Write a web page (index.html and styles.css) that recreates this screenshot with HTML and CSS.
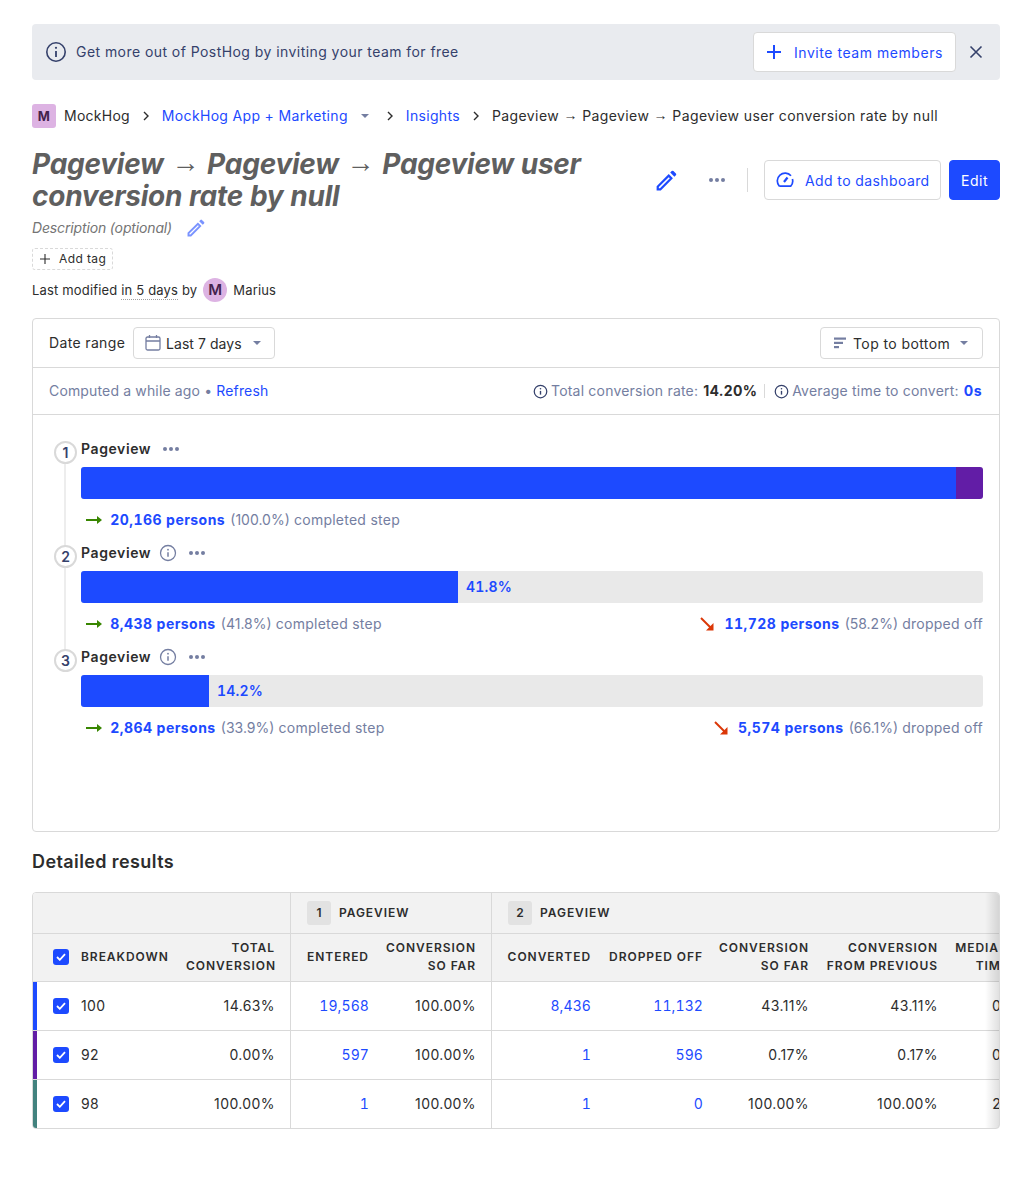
FILE: index.html
```html
<!DOCTYPE html>
<html>
<head>
<meta charset="utf-8">
<title>Pageview funnel</title>
<link rel="stylesheet" href="styles.css">
</head>
<body>

<div class="banner">
  <svg class="banner-info" width="24" height="24" viewBox="0 0 24 24" fill="none" stroke="currentColor"><circle cx="12" cy="12" r="9.2" stroke-width="1.6"/><path d="M12 11v6" stroke-width="1.8"/><circle cx="12" cy="7.8" r="1.1" fill="currentColor" stroke="none"/></svg>
  <span class="banner-text">Get more out of PostHog by inviting your team for free</span>
  <button class="btn btn-invite">
    <svg width="18" height="18" viewBox="0 0 18 18" fill="none" stroke="currentColor" stroke-width="2"><path d="M9 2v14M2 9h14"/></svg>
    <span>Invite team members</span>
  </button>
  <svg class="banner-close" width="14" height="14" viewBox="0 0 14 14" fill="none" stroke="currentColor" stroke-width="1.6"><path d="M1.5 1.5l11 11M12.5 1.5l-11 11"/></svg>
</div>

<div class="crumbs">
  <span class="org-mark">M</span>
  <span class="crumb crumb-org">MockHog</span>
  <svg class="chev" width="8" height="10" viewBox="0 0 8 10" fill="none" stroke="currentColor" stroke-width="1.4"><path d="M2 1l4 4-4 4"/></svg>
  <a class="crumb link">MockHog App + Marketing</a>
  <span class="caret crumb-caret"></span>
  <svg class="chev" width="8" height="10" viewBox="0 0 8 10" fill="none" stroke="currentColor" stroke-width="1.4"><path d="M2 1l4 4-4 4"/></svg>
  <a class="crumb link">Insights</a>
  <svg class="chev" width="8" height="10" viewBox="0 0 8 10" fill="none" stroke="currentColor" stroke-width="1.4"><path d="M2 1l4 4-4 4"/></svg>
  <span class="crumb crumb-here">Pageview <span class="arr">→</span> Pageview <span class="arr">→</span> Pageview user conversion rate by null</span>
</div>

<div class="head">
  <h1 class="title">Pageview <span class="arr">→</span> Pageview <span class="arr">→</span> Pageview user conversion rate by null</h1>
  <div class="head-actions">
    <svg class="pencil" width="21" height="21" viewBox="1.500 1.500 17 17" fill="currentColor"><path d="M2 14.6V18h3.400L15.200 8.200l-3.400-3.400L2 14.600zm1.800 1.600v-.9l8-8 .9.9-8 8H3.800zM13 3.600l3.400 3.400 1.200-1.200a1 1 0 0 0 0-1.400l-2-2a1 1 0 0 0-1.400 0L13 3.600z"/></svg>
    <span class="dots dots-head"><i></i><i></i><i></i></span>
    <span class="head-sep"></span>
    <button class="btn btn-dash">
      <svg width="18" height="18" viewBox="0 0 18 18" fill="none" stroke="currentColor" stroke-width="1.7"><path d="M3.300 15.200A7.500 7.500 0 1 1 15 4.800M16.400 8a7.500 7.500 0 0 1-1.700 7.200H3.300"/><path d="M8 11l3.500-4.500" stroke-width="2.200"/></svg>
      <span>Add to dashboard</span>
    </button>
    <button class="btn btn-edit"><span>Edit</span></button>
  </div>
</div>

<div class="desc">
  <span>Description (optional)</span>
  <svg width="18" height="18" viewBox="1.500 1.500 17 17" fill="currentColor"><path d="M2 14.6V18h3.400L15.200 8.200l-3.400-3.400L2 14.600zm1.800 1.600v-.9l8-8 .9.9-8 8H3.800zM13 3.600l3.400 3.400 1.200-1.200a1 1 0 0 0 0-1.400l-2-2a1 1 0 0 0-1.400 0L13 3.600z"/></svg>
</div>
<div class="tag-add">
  <svg width="10" height="10" viewBox="0 0 10 10" fill="none" stroke="currentColor" stroke-width="1.100"><path d="M5 0v10M0 5h10"/></svg>
  <span>Add tag</span>
</div>
<div class="modified">
  <span>Last modified <span class="dotted">in 5 days</span> by</span>
  <span class="avatar">M</span>
  <span class="modified-name">Marius</span>
</div>

<section class="card">
  <div class="card-bar">
    <span class="bar-label">Date range</span>
    <button class="select select-date">
      <svg width="18" height="18" viewBox="0 0 18 18" fill="none" stroke="#747ea1" stroke-width="1.300"><rect x="2" y="3" width="14" height="13" rx="1.500"/><path d="M2 7h14M5.500 1v3M12.500 1v3"/></svg>
      <span>Last 7 days</span>
      <span class="caret"></span>
    </button>
    <button class="select select-order">
      <svg width="14" height="14" viewBox="0 0 14 14" fill="#747ea1"><rect x="1" y="1.500" width="12" height="2.200"/><rect x="1" y="5.800" width="9" height="2.200"/><rect x="1" y="10" width="5" height="2.200"/></svg>
      <span>Top to bottom</span>
      <span class="caret"></span>
    </button>
  </div>

  <div class="card-status">
    <span class="computed">Computed a while ago <b class="bullet">•</b> <a class="link">Refresh</a></span>
    <span class="rates">
      <svg class="info-sm" width="15" height="15" viewBox="0 0 24 24" fill="none" stroke="#35416b"><circle cx="12" cy="12" r="10" stroke-width="2"/><path d="M12 11v6" stroke-width="2.200"/><circle cx="12" cy="7.500" r="1.300" fill="#35416b" stroke="none"/></svg>
      <span>Total conversion rate:</span> <b class="rate-val">14.20%</b>
      <span class="rate-sep"></span>
      <svg class="info-sm" width="15" height="15" viewBox="0 0 24 24" fill="none" stroke="#35416b"><circle cx="12" cy="12" r="10" stroke-width="2"/><path d="M12 11v6" stroke-width="2.200"/><circle cx="12" cy="7.500" r="1.300" fill="#35416b" stroke="none"/></svg>
      <span>Average time to convert:</span> <b class="rate-time">0s</b>
    </span>
  </div>

  <div class="funnel">
    <div class="step">
      <span class="step-num">1</span>
      <div class="step-head"><b>Pageview</b><span class="dots"><i></i><i></i><i></i></span></div>
      <div class="track">
        <div class="fill fill-blue" style="width:97%"></div>
        <div class="fill fill-purple" style="width:3%"></div>
      </div>
      <div class="step-foot">
        <span class="stat">
          <svg class="arrow" width="16" height="10" viewBox="0 0 16 10"><path d="M0 5h13" stroke="#388600" stroke-width="2"/><path d="M11 1l5 4-5 4z" fill="#388600"/></svg>
          <b>20,166 persons</b> <span class="pct">(100.0%)</span> completed step
        </span>
      </div>
    </div>

    <div class="step">
      <span class="step-num">2</span>
      <div class="step-head"><b>Pageview</b>
        <svg class="info-step" width="18" height="18" viewBox="0 0 24 24" fill="none" stroke="#747ea1"><circle cx="12" cy="12" r="10" stroke-width="1.700"/><path d="M12 11v6" stroke-width="2"/><circle cx="12" cy="7.500" r="1.200" fill="#747ea1" stroke="none"/></svg>
        <span class="dots"><i></i><i></i><i></i></span></div>
      <div class="track">
        <div class="fill fill-blue" style="width:41.8%"></div>
        <span class="track-pct">41.8%</span>
      </div>
      <div class="step-foot">
        <span class="stat">
          <svg class="arrow" width="16" height="10" viewBox="0 0 16 10"><path d="M0 5h13" stroke="#388600" stroke-width="2"/><path d="M11 1l5 4-5 4z" fill="#388600"/></svg>
          <b>8,438 persons</b> <span class="pct">(41.8%)</span> completed step
        </span>
        <span class="stat">
          <svg class="arrow-down" width="14" height="14" viewBox="0 0 14 14"><path d="M1 1l10 10" stroke="#db3707" stroke-width="2"/><path d="M13.500 13.500H6l7.500-7.500z" fill="#db3707"/></svg>
          <b>11,728 persons</b> <span class="pct">(58.2%)</span> dropped off
        </span>
      </div>
    </div>

    <div class="step step-last">
      <span class="step-num">3</span>
      <div class="step-head"><b>Pageview</b>
        <svg class="info-step" width="18" height="18" viewBox="0 0 24 24" fill="none" stroke="#747ea1"><circle cx="12" cy="12" r="10" stroke-width="1.700"/><path d="M12 11v6" stroke-width="2"/><circle cx="12" cy="7.500" r="1.200" fill="#747ea1" stroke="none"/></svg>
        <span class="dots"><i></i><i></i><i></i></span></div>
      <div class="track">
        <div class="fill fill-blue" style="width:14.2%"></div>
        <span class="track-pct">14.2%</span>
      </div>
      <div class="step-foot">
        <span class="stat">
          <svg class="arrow" width="16" height="10" viewBox="0 0 16 10"><path d="M0 5h13" stroke="#388600" stroke-width="2"/><path d="M11 1l5 4-5 4z" fill="#388600"/></svg>
          <b>2,864 persons</b> <span class="pct">(33.9%)</span> completed step
        </span>
        <span class="stat">
          <svg class="arrow-down" width="14" height="14" viewBox="0 0 14 14"><path d="M1 1l10 10" stroke="#db3707" stroke-width="2"/><path d="M13.500 13.500H6l7.500-7.500z" fill="#db3707"/></svg>
          <b>5,574 persons</b> <span class="pct">(66.1%)</span> dropped off
        </span>
      </div>
    </div>
  </div>
</section>

<h2 class="results-title">Detailed results</h2>

<div class="table-wrap">
  <table class="results">
    <colgroup>
      <col class="c-break"><col class="c-total"><col class="c-entered"><col class="c-sofar">
      <col class="c-conv"><col class="c-drop"><col class="c-sofar2"><col class="c-prev"><col class="c-time">
    </colgroup>
    <thead>
      <tr class="group-row">
        <th colspan="2" class="end"></th>
        <th colspan="2" class="group end"><span class="group-num">1</span>Pageview</th>
        <th colspan="5" class="group"><span class="group-num">2</span>Pageview</th>
      </tr>
      <tr class="col-row">
        <th class="left"><span class="check-cell"><span class="check"><svg width="10" height="8" viewBox="0 0 10 8" fill="none" stroke="#fff" stroke-width="1.800"><path d="M1 4l2.800 2.800L9 1.200"/></svg></span>Breakdown</span></th>
        <th class="end">Total<br>conversion</th>
        <th>Entered</th>
        <th class="end">Conversion<br>so far</th>
        <th>Converted</th>
        <th>Dropped off</th>
        <th>Conversion<br>so far</th>
        <th>Conversion<br>from previous</th>
        <th>Median<br>time</th>
      </tr>
    </thead>
    <tbody>
      <tr>
        <td class="left series-blue"><span class="check-cell"><span class="check"><svg width="10" height="8" viewBox="0 0 10 8" fill="none" stroke="#fff" stroke-width="1.800"><path d="M1 4l2.800 2.800L9 1.200"/></svg></span>100</span></td>
        <td class="end">14.63%</td>
        <td><a class="link">19,568</a></td>
        <td class="end">100.00%</td>
        <td><a class="link">8,436</a></td>
        <td><a class="link">11,132</a></td>
        <td>43.11%</td>
        <td>43.11%</td>
        <td>0s</td>
      </tr>
      <tr>
        <td class="left series-purple"><span class="check-cell"><span class="check"><svg width="10" height="8" viewBox="0 0 10 8" fill="none" stroke="#fff" stroke-width="1.800"><path d="M1 4l2.800 2.800L9 1.200"/></svg></span>92</span></td>
        <td class="end">0.00%</td>
        <td><a class="link">597</a></td>
        <td class="end">100.00%</td>
        <td><a class="link">1</a></td>
        <td><a class="link">596</a></td>
        <td>0.17%</td>
        <td>0.17%</td>
        <td>0s</td>
      </tr>
      <tr class="last">
        <td class="left series-teal"><span class="check-cell"><span class="check"><svg width="10" height="8" viewBox="0 0 10 8" fill="none" stroke="#fff" stroke-width="1.800"><path d="M1 4l2.800 2.800L9 1.200"/></svg></span>98</span></td>
        <td class="end">100.00%</td>
        <td><a class="link">1</a></td>
        <td class="end">100.00%</td>
        <td><a class="link">1</a></td>
        <td><a class="link">0</a></td>
        <td>100.00%</td>
        <td>100.00%</td>
        <td>2s</td>
      </tr>
    </tbody>
  </table>
  <div class="scroll-shade"></div>
</div>

</body>
</html>
```

FILE: styles.css
```css
* {
  box-sizing: border-box;
}

body {
  margin: 0;
  padding: 24px 32px 64px;
  background: #fff;
  color: #2d2d2d;
  font-family: Inter, "Liberation Sans", sans-serif;
  font-size: 14px;
  line-height: 20px;
  letter-spacing: 0.4px;
}

button {
  font: inherit;
  letter-spacing: inherit;
  cursor: pointer;
  white-space: nowrap;
}

svg {
  flex-shrink: 0;
}

.link {
  color: #1d4aff;
}

/* the arrows come from a thinner font than the text round them */
.arr {
  font-family: "Liberation Sans", sans-serif;
  font-style: normal;
  font-weight: 400;
  line-height: 1;
  vertical-align: 1px;
}

/* banner */
.banner {
  display: flex;
  align-items: center;
  height: 56px;
  padding: 0 17px 0 12px;
  background: #e9ebef;
  border-radius: 4px;
  color: #35416b;
  letter-spacing: 0.44px;
}
.banner-info {
  margin-right: 8px;
}
.banner-text {
  flex: 1;
}
.btn {
  display: inline-flex;
  align-items: center;
  border: 1px solid #d9d9d9;
  border-radius: 4px;
  background: #fff;
  color: #1d4aff;
}
.btn span {
  padding-top: 1px;
}
.btn-invite {
  height: 40px;
  width: 203px;
  padding: 0 11px;
  gap: 11px;
  letter-spacing: 0.55px;
}
.banner-close {
  margin-left: 13px;
}

/* breadcrumbs */
.crumbs {
  display: flex;
  align-items: center;
  height: 24px;
  margin-top: 24px;
  letter-spacing: 0.33px;
}
.crumb-org {
  letter-spacing: 0.25px;
}
.crumb-here {
  letter-spacing: 0.4px;
}
.org-mark {
  display: flex;
  align-items: center;
  justify-content: center;
  width: 24px;
  height: 24px;
  margin-right: 8px;
  border-radius: 3px;
  background: #ddb3e3;
  color: #44224c;
  font-size: 13px;
  font-weight: 700;
}
.chev {
  margin: 0 12px;
  color: #2d2d2d;
}
.caret {
  display: inline-block;
  width: 0;
  height: 0;
  border-left: 4px solid transparent;
  border-right: 4px solid transparent;
  border-top: 4px solid #747ea1;
}
.crumb-caret {
  margin-left: 13px;
  margin-right: 5px;
}

/* title row */
.head {
  display: flex;
  justify-content: space-between;
  margin-top: 20px;
}
.title {
  width: 590px;
  margin: 0;
  color: #5f5f5f;
  font-size: 28px;
  font-style: italic;
  font-weight: 700;
  line-height: 32px;
  letter-spacing: -0.25px;
  word-spacing: 0.5px;
}
.title .arr {
  margin: 0 1px;
  vertical-align: 2px;
}
.head-actions {
  display: flex;
  align-items: center;
  height: 40px;
  margin-top: 12px;
}
.pencil {
  color: #1d4aff;
}
.dots {
  display: inline-flex;
  gap: 2px;
}
.dots i {
  width: 4px;
  height: 4px;
  border-radius: 50%;
  background: #747ea1;
}
.dots-head {
  margin-left: 32px;
}
.head-sep {
  width: 1px;
  height: 24px;
  margin: 0 16px 0 22px;
  background: #d9d9d9;
}
.btn-dash {
  height: 40px;
  width: 177px;
  padding: 0 11px;
  gap: 11px;
}
.btn-edit {
  justify-content: center;
  width: 51px;
  height: 40px;
  margin-left: 8px;
  border-color: #1d4aff;
  background: #1d4aff;
  color: #fff;
  letter-spacing: 0.5px;
}

.desc {
  display: flex;
  align-items: center;
  gap: 15px;
  margin-top: 6px;
  color: #747474;
  font-style: italic;
  letter-spacing: -0.15px;
}
.desc svg {
  color: #7a93ff;
}
.tag-add {
  display: inline-flex;
  align-items: center;
  gap: 9px;
  height: 22px;
  margin-top: 10px;
  padding: 0 6px 0 7px;
  border: 1px dashed #d9d9d9;
  border-radius: 3px;
  font-size: 12px;
}
.modified {
  display: flex;
  align-items: center;
  height: 24px;
  margin-top: 8px;
  font-size: 13px;
  letter-spacing: 0.17px;
}
.dotted {
  border-bottom: 1px dotted #a0a0a0;
  padding-bottom: 1px;
}
.avatar {
  display: flex;
  align-items: center;
  justify-content: center;
  width: 24px;
  height: 24px;
  margin: 0 6px;
  border-radius: 50%;
  background: #ddb3e3;
  color: #44224c;
  font-size: 15px;
  font-weight: 600;
}

/* funnel card */
.card {
  height: 514px;
  margin-top: 16px;
  border: 1px solid #d9d9d9;
  border-radius: 4px;
}
.card-bar {
  display: flex;
  align-items: center;
  height: 49px;
  padding: 0 16px;
  border-bottom: 1px solid #d9d9d9;
}
.bar-label {
  width: 84px;
  letter-spacing: 0.35px;
}
.select {
  display: inline-flex;
  align-items: center;
  height: 32px;
  padding: 0 12px;
  border: 1px solid #d9d9d9;
  border-radius: 4px;
  background: #fff;
  color: #2d2d2d;
}
.select span {
  padding-top: 1px;
}
.select .caret {
  padding: 0;
}
.select-date {
  width: 142px;
  padding-left: 10px;
  gap: 4px;
  letter-spacing: 0.05px;
}
.select-date .caret {
  margin-left: 7px;
}
.select-order {
  width: 163px;
  margin-left: auto;
  gap: 6px;
}
.select-order .caret {
  margin-left: 4px;
}
.card-status {
  display: flex;
  align-items: center;
  justify-content: space-between;
  height: 47px;
  padding: 0 17px 0 16px;
  border-bottom: 1px solid #d9d9d9;
  color: #747ea1;
  letter-spacing: 0.15px;
}
.bullet {
  font-weight: 400;
}
.rates {
  display: flex;
  align-items: center;
  white-space: nowrap;
  letter-spacing: 0.2px;
}
.info-sm {
  margin-right: 3px;
}
.rate-val {
  margin-left: 5px;
  color: #2d2d2d;
  font-weight: 700;
  letter-spacing: 0.3px;
}
.rate-sep {
  width: 1px;
  height: 14px;
  margin: 0 9px 0 7px;
  background: #d9d9d9;
}
.rate-time {
  margin-left: 5px;
  color: #1d4aff;
  font-weight: 700;
  letter-spacing: 0.5px;
}

/* funnel steps */
.funnel {
  padding: 24px 16px 0 48px;
}
.step {
  position: relative;
  height: 104px;
}
.step::before {
  content: "";
  position: absolute;
  left: -17px;
  top: 8px;
  bottom: -8px;
  width: 2px;
  background: #ededed;
}
.step-last::before {
  display: none;
}
.step-num {
  position: absolute;
  left: -27px;
  top: 2px;
  display: flex;
  align-items: center;
  justify-content: center;
  width: 23px;
  height: 23px;
  border: 2px solid #d9d9d9;
  border-radius: 50%;
  background: #fff;
  color: #35416b;
  font-weight: 600;
  letter-spacing: 0;
}
.step-head {
  display: flex;
  align-items: center;
  height: 20px;
}
.step-head b {
  font-weight: 600;
  letter-spacing: 0.6px;
}
.step-head .dots {
  margin-left: 12px;
}
.info-step {
  margin-left: 8px;
}
.track {
  position: relative;
  display: flex;
  align-items: center;
  height: 32px;
  margin-top: 8px;
  border-radius: 3px;
  background: #e9e9e9;
  overflow: hidden;
}
.fill {
  height: 100%;
}
.fill-blue {
  background: #1d4aff;
}
.fill-purple {
  background: #621da6;
}
.track-pct {
  margin-left: 8px;
  color: #1d4aff;
  font-weight: 600;
  font-variant-numeric: tabular-nums;
  letter-spacing: 0.2px;
}
.step-foot {
  display: flex;
  justify-content: space-between;
  margin-top: 11px;
}
.stat {
  display: block;
  color: #747ea1;
  white-space: nowrap;
  letter-spacing: 0.25px;
}
.stat svg {
  vertical-align: middle;
  position: relative;
  top: -1px;
}
.stat b {
  color: #1d4aff;
  font-weight: 700;
  font-variant-numeric: tabular-nums;
  letter-spacing: 0.45px;
}
.pct {
  margin-left: 1px;
  letter-spacing: 0;
}
.arrow {
  margin: 0 4px 0 5px;
}
.arrow-down {
  margin-right: 6px;
}

/* results */
.results-title {
  margin: 18px 0 0;
  font-size: 18px;
  font-weight: 600;
  line-height: 24px;
}
.table-wrap {
  position: relative;
  width: 968px;
  margin-top: 18px;
  border: 1px solid #d9d9d9;
  border-radius: 4px;
  overflow: hidden;
}
.results {
  width: 984px;
  table-layout: fixed;
  border-collapse: separate;
  border-spacing: 0;
}
.c-break { width: 145px; }
.c-total { width: 113px; }
.c-entered { width: 86px; }
.c-sofar { width: 115px; }
.c-conv { width: 107px; }
.c-drop { width: 112px; }
.c-sofar2 { width: 106px; }
.c-prev { width: 129px; }
.c-time { width: 71px; }
.results th,
.results td {
  padding: 0 8px;
  border-bottom: 1px solid #d9d9d9;
  text-align: right;
  white-space: nowrap;
}
.results th {
  background: #f2f2f2;
  color: #2d2d2d;
  font-size: 12px;
  font-weight: 600;
  line-height: 18px;
  letter-spacing: 0.95px;
  text-transform: uppercase;
}
.results td {
  height: 49px;
}
.results td .link {
  font-variant-numeric: tabular-nums;
  letter-spacing: 0.1px;
}
.results .end {
  padding-right: 15px;
  border-right: 1px solid #d9d9d9;
}
.results .left {
  padding-left: 20px;
  text-align: left;
}
.results .last td {
  height: 48px;
  border-bottom: 0;
}
.group-row th {
  height: 41px;
}
.col-row th {
  height: 48px;
  padding-bottom: 2px;
}
.results .group {
  padding-left: 16px;
  text-align: left;
}
.group-num {
  display: inline-flex;
  align-items: center;
  justify-content: center;
  width: 24px;
  height: 24px;
  margin-right: 8px;
  border-radius: 3px;
  background: #e2e2e2;
  letter-spacing: 0;
}
.check-cell {
  display: flex;
  align-items: center;
  gap: 12px;
}
.check {
  display: flex;
  align-items: center;
  justify-content: center;
  width: 16px;
  height: 16px;
  border-radius: 3px;
  background: #1d4aff;
}
.series-blue { box-shadow: inset 4px 0 0 #1d4aff; }
.series-purple { box-shadow: inset 4px 0 0 #621da6; }
.series-teal { box-shadow: inset 4px 0 0 #42827e; }
.scroll-shade {
  position: absolute;
  top: 0;
  right: 0;
  bottom: 0;
  width: 14px;
  background: linear-gradient(to right, rgba(0,0,0,0), rgba(0,0,0,0.12));
}
```
